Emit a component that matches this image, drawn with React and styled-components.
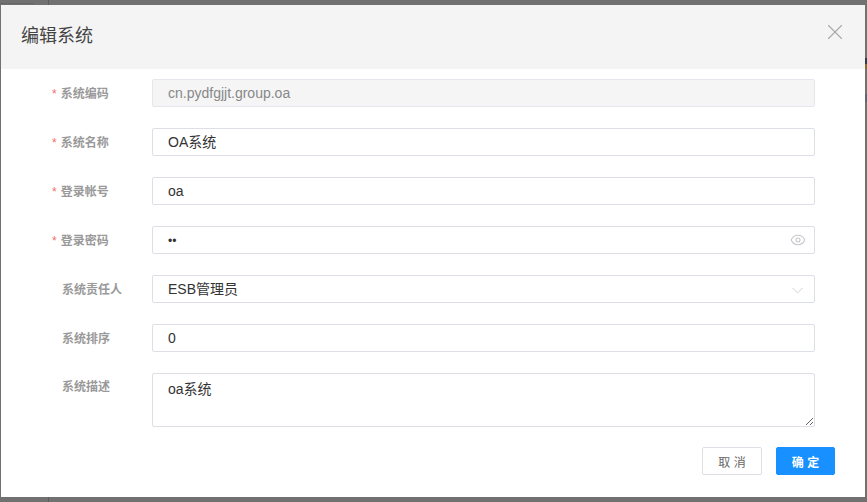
import React from 'react'
import styled, { createGlobalStyle } from 'styled-components'
import { Eye, ChevronDown, X } from 'lucide-react'

const Global = createGlobalStyle`
  html, body { margin: 0; height: 100%; overflow: hidden; }
  body { font-family: "Liberation Sans", "Noto Sans CJK SC", sans-serif; background: #717171; }
`

// the dimmed page behind the modal only shows through at the edges
const Overlay = styled.div`
  width: 867px;
  height: 502px;
  padding: 5px 2px 5px 1px;
  box-sizing: border-box;
  background:
    linear-gradient(#5d5d5d, #5d5d5d) 48px 0 / 1px 100% no-repeat,
    linear-gradient(#666, #666) 0 3px / 34px 1px no-repeat,
    linear-gradient(#2f3b48, #2f3b48) 865px 58px / 2px 6px no-repeat,
    linear-gradient(#86692f, #86692f) 865px 64px / 2px 5px no-repeat,
    linear-gradient(#5c6672, #5c6672) 865px 94px / 2px 8px no-repeat,
    #717171;
`

const Modal = styled.div`
  height: 492px;
  background: #fff;
  display: flex;
  flex-direction: column;
`

const Header = styled.div`
  height: 64px;
  flex: none;
  background: #f4f4f4;
  display: flex;
  justify-content: space-between;
  padding: 0 22px 0 20px;
`

const Title = styled.div`
  font-size: 18px;
  line-height: 24px;
  padding-top: 19px;
  color: #444;
`

const Close = styled.div`
  display: flex;
  padding-top: 14px;
  height: 26px;
  margin-right: -5px;
  color: #a8a8a8;
`

const Form = styled.div`
  display: flex;
  flex-direction: column;
  gap: 21px;
  padding: 10px 50px 0 0;
`

const Row = styled.div`
  display: grid;
  grid-template-columns: 151px 1fr;
  align-items: ${p => (p.$top ? 'start' : 'center')};
`

const Label = styled.label`
  font-size: 12px;
  font-weight: 700;
  color: #999;
  padding-left: ${p => (p.$required ? '51px' : '61px')};
  line-height: 16px;
  padding-top: ${p => (p.$top ? '6px' : '1px')};
`

const Star = styled.span`
  color: #f56c6c;
  font-weight: 400;
  margin-right: 4px;
`

const Field = styled.div`
  position: relative;
  height: 28px;
  box-sizing: border-box;
  border: 1px solid ${p => (p.$disabled ? '#e4e7ed' : '#dcdfe6')};
  border-radius: 2px;
  background: ${p => (p.$disabled ? '#f5f5f6' : '#fff')};
  color: ${p => (p.$disabled ? '#888' : '#333')};
  font-size: 14px;
  line-height: 26px;
  padding: 0 15px;
`

const TextArea = styled.textarea`
  display: block;
  width: 100%;
  height: 54px;
  box-sizing: border-box;
  border: 1px solid #dcdfe6;
  border-radius: 2px;
  padding: 5px 15px;
  margin: 0;
  outline: none;
  font: 14px/20px "Liberation Sans", "Noto Sans CJK SC", sans-serif;
  color: #333;
`

const Dots = styled.span`
  font-size: 12px;
`

const Suffix = styled.span`
  position: absolute;
  right: ${p => p.$right}px;
  top: ${p => p.$top}px;
  height: 26px;
  display: flex;
  align-items: center;
  color: #c6c6cb;
`

const Footer = styled.div`
  display: flex;
  justify-content: flex-end;
  gap: 14px;
  padding: 20px 30px 0 0;
`

const Button = styled.button`
  width: ${p => (p.$primary ? '59px' : '60px')};
  height: 28px;
  box-sizing: border-box;
  border: 1px solid ${p => (p.$primary ? '#1890ff' : '#dcdfe6')};
  border-radius: 2px;
  background: ${p => (p.$primary ? '#1890ff' : '#fff')};
  color: ${p => (p.$primary ? '#fff' : '#666')};
  font: 12px "Liberation Sans", "Noto Sans CJK SC", sans-serif;
  font-weight: ${p => (p.$primary ? 700 : 400)};
  padding: 0;
`

const App = () => (
  <Overlay>
    <Global />
    <Modal>
      <Header>
        <Title>编辑系统</Title>
        <Close><X size={26} strokeWidth={1} /></Close>
      </Header>
      <Form>
        <Row>
          <Label $required><Star>*</Star>系统编码</Label>
          <Field $disabled>cn.pydfgjjt.group.oa</Field>
        </Row>
        <Row>
          <Label $required><Star>*</Star>系统名称</Label>
          <Field>OA系统</Field>
        </Row>
        <Row>
          <Label $required><Star>*</Star>登录帐号</Label>
          <Field>oa</Field>
        </Row>
        <Row>
          <Label $required><Star>*</Star>登录密码</Label>
          <Field>
            <Dots>••</Dots>
            <Suffix $right={8} $top={0}><Eye size={16} strokeWidth={1.6} /></Suffix>
          </Field>
        </Row>
        <Row>
          <Label>系统责任人</Label>
          <Field>
            ESB管理员
            <Suffix $right={7} $top={1}><ChevronDown size={19} strokeWidth={1} /></Suffix>
          </Field>
        </Row>
        <Row>
          <Label>系统排序</Label>
          <Field>0</Field>
        </Row>
        <Row $top>
          <Label $top>系统描述</Label>
          <TextArea defaultValue="oa系统" />
        </Row>
      </Form>
      <Footer>
        <Button>取 消</Button>
        <Button $primary>确 定</Button>
      </Footer>
    </Modal>
  </Overlay>
)

export default App
